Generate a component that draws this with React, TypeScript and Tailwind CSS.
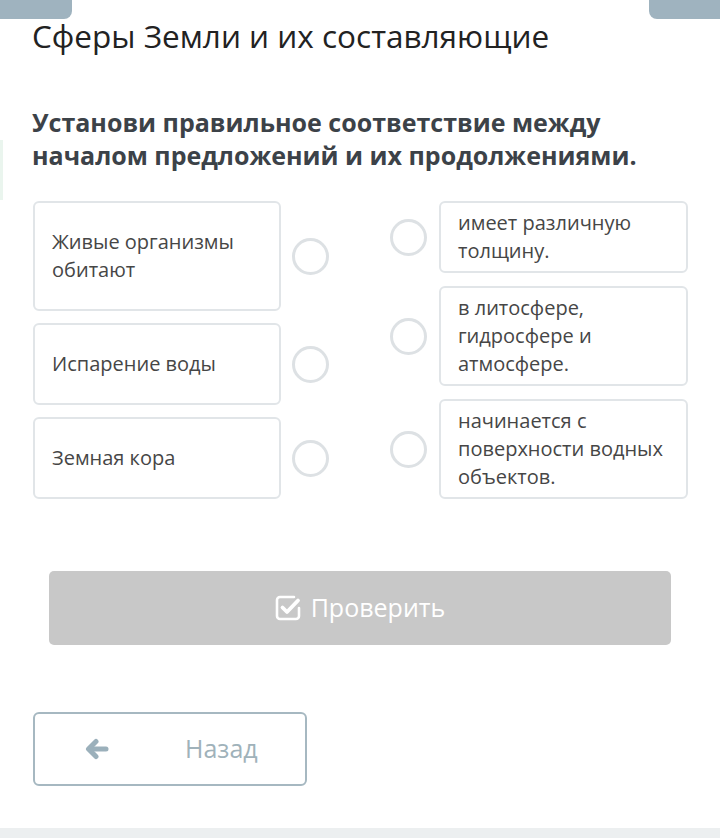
const left = [
  { id: 1, text: "Живые организмы обитают" },
  { id: 2, text: "Испарение воды" },
  { id: 3, text: "Земная кора" },
]

const right = [
  { id: 1, text: "имеет различную толщину." },
  { id: 2, text: "в литосфере, гидросфере и атмосфере." },
  { id: 3, text: "начинается с поверхности водных объектов." },
]

function Dot() {
  return <div className="w-[37px] h-[37px] shrink-0 rounded-full border-[3px] border-[#dde1e4] bg-white" />
}

function CheckSquare() {
  return (
    <svg viewBox="0 0 26 26" className="w-[26px] h-[26px]" fill="none" stroke="currentColor">
      <path d="M19 2H5a3 3 0 0 0-3 3v16a3 3 0 0 0 3 3h16a3 3 0 0 0 3-3v-8" strokeWidth="2.6" strokeLinecap="round" />
      <path d="M7.5 12.5l4.5 4.5 11-11.5" strokeWidth="3.8" strokeLinecap="round" strokeLinejoin="round" />
    </svg>
  )
}

function ArrowLeft() {
  return (
    <svg viewBox="0 0 24 24" className="w-[24px] h-[24px]" fill="none" stroke="currentColor" strokeLinecap="round" strokeLinejoin="round">
      <path d="M21 12H6" strokeWidth="5" />
      <path d="M11 4.5L3.5 12l7.5 7.5" strokeWidth="5" />
    </svg>
  )
}

export default function App() {
  return (
    <div
      className="relative w-[720px] h-[838px] bg-white overflow-hidden flex flex-col"
      style={{ fontFamily: '"Open Sans", "Noto Sans", sans-serif' }}
    >
      <div className="absolute top-0 left-0 w-[72px] h-[19px] bg-[#9fb3bf] rounded-br-[8px]" />
      <div className="absolute top-0 right-0 w-[71px] h-[19px] bg-[#9fb3bf] rounded-bl-[8px]" />
      <div className="absolute left-0 top-[140px] w-[3px] h-[60px] bg-[#eaf5ee]" />

      <h1 className="mt-[15px] px-[32px] text-[31.5px] leading-[42px] font-normal text-[#222]">
        Сферы Земли и их составляющие
      </h1>

      <p className="mt-[49px] px-[32px] text-[25px] leading-[33px] font-bold text-[#3c4248]">
        Установи правильное соответствие между началом предложений и их продолжениями.
      </p>

      <div className="mt-[29px] flex justify-between pl-[33px] pr-[32px]">
        <div className="flex flex-col gap-[12px]">
          {left.map((item) => (
            <div key={item.id} className="flex items-center gap-[11px]">
              <div className="w-[248px] min-h-[82px] rounded-[6px] border-2 border-[#e1e5e8] px-[17px] py-[25px] flex items-center text-[20px] leading-[28px] text-[#464646]">
                {item.text}
              </div>
              <Dot />
            </div>
          ))}
        </div>

        <div className="flex flex-col gap-[13px]">
          {right.map((item) => (
            <div key={item.id} className="flex items-center gap-[12px]">
              <Dot />
              <div className="w-[249px] rounded-[6px] border-2 border-[#e1e5e8] pl-[17px] pr-[8px] py-[6px] text-[20px] leading-[28px] text-[#464646]">
                {item.text}
              </div>
            </div>
          ))}
        </div>
      </div>

      <div className="mt-[72px] px-[49px]">
        <button className="w-full h-[74px] rounded-[5px] bg-[#c8c8c8] flex items-center justify-center gap-[10px] text-white text-[25px]">
          <CheckSquare />
          <span>Проверить</span>
        </button>
      </div>

      <div className="mt-[67px] px-[33px]">
        <button className="w-[274px] h-[74px] rounded-[6px] border-2 border-[#a6b8c1] flex items-center pl-[50px] text-[#a0b2ba] text-[25px]">
          <span className="text-[#9bb0bb]">
            <ArrowLeft />
          </span>
          <span className="ml-[76px]">Назад</span>
        </button>
      </div>

      <div className="mt-auto h-[10px] bg-[#eceff0]" />
    </div>
  )
}
